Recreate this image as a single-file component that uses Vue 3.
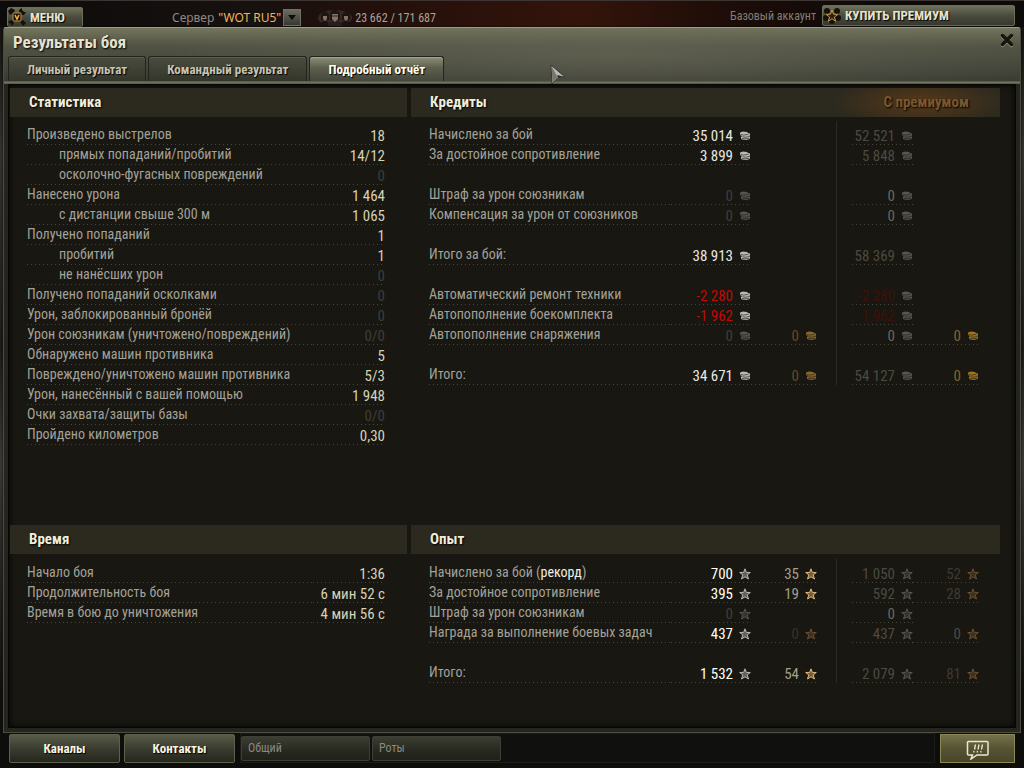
<script setup>
import { ref } from 'vue'

const tabs = ['Личный результат', 'Командный результат', 'Подробный отчёт']
const activeTab = ref(2)

const stats = [
  { label: 'Произведено выстрелов', value: '18' },
  { label: 'прямых попаданий/пробитий', value: '14/12', sub: true },
  { label: 'осколочно-фугасных повреждений', value: '0', sub: true, dim: true },
  { label: 'Нанесено урона', value: '1 464' },
  { label: 'с дистанции свыше 300 м', value: '1 065', sub: true },
  { label: 'Получено попаданий', value: '1' },
  { label: 'пробитий', value: '1', sub: true },
  { label: 'не нанёсших урон', value: '0', sub: true, dim: true },
  { label: 'Получено попаданий осколками', value: '0', dim: true },
  { label: 'Урон, заблокированный бронёй', value: '0', dim: true },
  { label: 'Урон союзникам (уничтожено/повреждений)', value: '0/0', dim: true },
  { label: 'Обнаружено машин противника', value: '5' },
  { label: 'Повреждено/уничтожено машин противника', value: '5/3' },
  { label: 'Урон, нанесённый с вашей помощью', value: '1 948' },
  { label: 'Очки захвата/защиты базы', value: '0/0', dim: true },
  { label: 'Пройдено километров', value: '0,30' },
]

const times = [
  { label: 'Начало боя', value: '1:36' },
  { label: 'Продолжительность боя', value: '6 мин 52 с' },
  { label: 'Время в бою до уничтожения', value: '4 мин 56 с' },
]

// Each cell is [text, style]; order: base, base extra, premium, premium extra.
const credits = [
  { label: 'Начислено за бой', cells: [['35 014', 'on'], null, ['52 521', 'prem'], null] },
  { label: 'За достойное сопротивление', cells: [['3 899', 'on'], null, ['5 848', 'prem'], null] },
  null,
  { label: 'Штраф за урон союзникам', cells: [['0', 'zero'], null, ['0', 'soft'], null] },
  { label: 'Компенсация за урон от союзников', cells: [['0', 'zero'], null, ['0', 'soft'], null] },
  null,
  { label: 'Итого за бой:', cells: [['38 913', 'on'], null, ['58 369', 'prem'], null] },
  null,
  { label: 'Автоматический ремонт техники', cells: [['-2 280', 'neg'], null, ['-2 280', 'negdim'], null] },
  { label: 'Автопополнение боекомплекта', cells: [['-1 962', 'neg'], null, ['-1 962', 'negdim'], null] },
  { label: 'Автопополнение снаряжения', cells: [['0', 'zero'], ['0', 'gold'], ['0', 'soft'], ['0', 'goldsoft']] },
  null,
  { label: 'Итого:', cells: [['34 671', 'on'], ['0', 'gold'], ['54 127', 'prem'], ['0', 'goldsoft']] },
]

const experience = [
  { label: 'Начислено за бой', note: 'рекорд', cells: [['700', 'hot'], ['35', 'free'], ['1 050', 'prem'], ['52', 'freedim']] },
  { label: 'За достойное сопротивление', cells: [['395', 'hot'], ['19', 'free'], ['592', 'prem'], ['28', 'freedim']] },
  { label: 'Штраф за урон союзникам', cells: [['0', 'zero'], null, ['0', 'soft'], null] },
  { label: 'Награда за выполнение боевых задач', cells: [['437', 'hot'], ['0', 'freezero'], ['437', 'prem'], ['0', 'freesoft']] },
  null,
  { label: 'Итого:', cells: [['1 532', 'hot'], ['54', 'free'], ['2 079', 'prem'], ['81', 'freedim']] },
]

const ledgers = [
  { id: 'credits', title: 'Кредиты', icon: 'coin', rows: credits, premium: true },
  { id: 'xp', title: 'Опыт', icon: 'star', rows: experience, premium: false },
]
const lists = [
  { id: 'stats', title: 'Статистика', rows: stats },
  { id: 'time', title: 'Время', rows: times },
]
</script>

<template>
  <div class="screen">
    <svg class="defs" aria-hidden="true">
      <symbol id="coin" viewBox="0 0 12 12">
        <path d="M1 2.500 4 1.500l4 .5 1 1 2 .5v2l-1 .5 1 .5v2l-1.500 1L7 10 3 9.500 2 8.500V7l1-1-2-1z" fill="currentColor" />
        <path d="M1.500 4.300l3 .8 5-.8M3.500 6.700l3 .5 4-.7M3 8.400l3 .4 4-.4" fill="none" stroke="#17160f" stroke-width=".6" />
      </symbol>
      <symbol id="star" viewBox="0 0 12 12">
        <path d="M6 .8 7.300 4.400l4 .1-3.100 2.400 1.300 4.100L6 8.800 2.500 11l1.300-4.100L.7 4.500l4-.1z" fill="currentColor" fill-opacity=".45" stroke="currentColor" stroke-width="1" />
      </symbol>
    </svg>

    <header class="topbar">
      <button class="menu" type="button">
        <svg viewBox="0 0 18 18" aria-hidden="true">
          <path d="M3 3l12 12M15 3 3 15" stroke="#11110c" stroke-width="3" />
          <path d="M0 3l3-3 4 2-1 2-4 3zM11 2l3-2v3l1 1h3l-2 3-4 0zM0 14l3-2 3 3-2 3-1-2zM13 14l2-2 3 3-3 3z" fill="#11110c" />
          <path d="M5 5h8v8H5z" fill="#1a160c" stroke="#c28a30" />
          <path d="M7 7l2 4 2-4" fill="none" stroke="#f0b24b" stroke-width="1.500" />
        </svg>
        МЕНЮ
      </button>
      <div class="server">
        <label for="server">Сервер</label>
        <div class="pick">
          <select id="server"><option>"WOT RU5"</option></select>
          <span class="arrow" aria-hidden="true"><svg viewBox="0 0 16 15"><path d="M4 5h8l-4 5z" fill="#0c0c08" /></svg></span>
        </div>
      </div>
      <div class="online">
        <svg viewBox="0 0 36 16" aria-hidden="true">
          <ellipse cx="18" cy="8" rx="17" ry="8" fill="#6b625c" opacity=".3" />
          <g>
            <path d="M3 16c0-4 3-5 5-5s4 1 4 5zM24 16c0-4 2-5 5-5s5 1 5 5z" fill="#171412" />
            <path d="M4 6a4 4 0 0 1 8 0v4H4zM25 6a4 4 0 0 1 8 0v4h-8z" fill="#1b1613" />
            <path d="M6 6h4v3l-2 2-2-2zM27 6h4v3l-2 2-2-2z" fill="#8d6d5b" />
            <path d="M11 16c0-4 4-5 7-5s7 1 7 5z" fill="#24201c" />
            <path d="M13 5a5 5 0 0 1 10 0v5H13z" fill="#1b1715" />
            <path d="M15 4h6v5l-3 3-3-3z" fill="#8a7268" />
            <path d="M15 6h6" stroke="#2d211c" />
          </g>
        </svg>
        23 662 / 171 687
      </div>
      <div class="account">
        <span>Базовый аккаунт</span>
        <button class="buy" type="button">
          <svg viewBox="0 0 18 18" aria-hidden="true">
            <g fill="#15120b"><circle cx="4" cy="4" r="3" /><circle cx="14" cy="4" r="3" /><circle cx="3" cy="11" r="3" /><circle cx="15" cy="11" r="3" /><circle cx="9" cy="14" r="3" /></g>
            <path d="M9 3l1.500 4.200 4.500.1-3.600 2.700 1.300 4.300L9 11.700l-3.700 2.600 1.300-4.300L3 7.300l4.500-.1z" fill="#2b2110" stroke="#c8974a" />
          </svg>
          КУПИТЬ ПРЕМИУМ
        </button>
      </div>
    </header>

    <main class="window">
      <div class="head">
        <div class="title">
          <h1>Результаты боя</h1>
          <button class="close" type="button" aria-label="Закрыть">
            <svg viewBox="0 0 16 16" aria-hidden="true">
              <path d="M3.500 4.500l9 9M12.500 4.500l-9 9" stroke="#8d8e79" stroke-width="3.500" stroke-linecap="round" />
              <path d="M3.500 3.500l9 9M12.500 3.500l-9 9" stroke="#15160f" stroke-width="3.500" stroke-linecap="round" />
            </svg>
          </button>
        </div>
        <div class="tabs" role="tablist">
          <button
            v-for="(tab, i) in tabs" :key="tab" type="button" role="tab"
            :aria-selected="activeTab === i" :class="{ active: activeTab === i }" @click="activeTab = i"
          >{{ tab }}</button>
        </div>
      </div>

      <div class="body">
        <section v-for="list in lists" :key="list.id" :class="['panel', list.id]">
          <h2>{{ list.title }}</h2>
          <table class="list">
            <tbody>
              <tr v-for="row in list.rows" :key="row.label">
                <th scope="row" :class="{ sub: row.sub }">{{ row.label }}</th>
                <td :class="row.dim ? 'zero' : 'value'">{{ row.value }}</td>
              </tr>
            </tbody>
          </table>
        </section>
        <section v-for="ledger in ledgers" :key="ledger.id" :class="['panel', ledger.id]">
          <h2>{{ ledger.title }}<span v-if="ledger.premium" class="with">С премиумом</span></h2>
          <table class="ledger">
            <colgroup>
              <col /><col class="c-main" /><col class="c-extra" /><col class="c-gap" /><col class="c-prem" /><col class="c-extra" />
            </colgroup>
            <tbody>
              <tr v-for="(row, i) in ledger.rows" :key="i">
                <template v-if="row">
                  <th scope="row">{{ row.label }}<template v-if="row.note"> (<b>{{ row.note }}</b>)</template></th>
                  <template v-for="(cell, j) in row.cells" :key="j">
                    <td v-if="j === 2"></td>
                    <td v-if="cell" :class="['sum', cell[1]]">
                      <span>{{ cell[0] }}</span><svg aria-hidden="true"><use :href="'#' + ledger.icon" /></svg>
                    </td>
                    <td v-else></td>
                  </template>
                </template>
                <td v-else colspan="6"></td>
              </tr>
            </tbody>
          </table>
        </section>
      </div>
    </main>

    <footer class="bottom">
      <button class="big" type="button">Каналы</button>
      <button class="big" type="button">Контакты</button>
      <div class="tray">
        <button type="button">Общий</button>
        <button type="button">Роты</button>
      </div>
      <button class="chat" type="button" aria-label="Уведомления">
        <svg viewBox="0 0 24 20" aria-hidden="true">
          <path d="M2 1.500h19a1 1 0 0 1 1 1V14a1 1 0 0 1-1 1H11l-6 4 1.500-4H2.500a1 1 0 0 1-1-1V2.500a1 1 0 0 1 1-1z" fill="none" stroke="#ece8cd" stroke-width="1.500" />
          <path d="M9.500 4.500l-1 5M13 4.500l-1 5M16.500 4.500l-1 5M8 11l-.3 1.500M11.500 11l-.3 1.500M15 11l-.3 1.500" stroke="#ece8cd" stroke-width="1.300" />
        </svg>
      </button>
    </footer>

    <svg class="pointer" viewBox="0 0 16 22" aria-hidden="true">
      <path d="M1 1l14 12-7 .5L2 20z" fill="#b9b9b3" stroke="#34342e" />
      <path d="M1.500 2l6 11L2.500 19z" fill="#77776f" />
      <path d="M7.500 13l7 0-7-2z" fill="#30302b" />
    </svg>
  </div>
</template>

<style>
body {
  margin: 0;
  background: #0d0c0a;
}
</style>

<style scoped>
.screen {
  position: relative;
  display: flex;
  flex-direction: column;
  box-sizing: border-box;
  min-height: 100vh;
  background: linear-gradient(#0f0c0a, #34322f 20%, #1c1b19 45%, #3a3734 60%, #100f0d 90%);
  color: #a3a198;
  font-family: "Roboto Condensed", "Liberation Sans Narrow", "Liberation Sans", sans-serif;
  font-size: 15px;
}
button,
select {
  font: inherit;
  cursor: pointer;
}
button {
  padding: 0;
  border: 0;
}
.defs {
  position: absolute;
  width: 0;
  height: 0;
}

.topbar {
  display: flex;
  align-items: center;
  height: 27px;
  padding: 0 9px 0 7px;
  border-top: 1px solid #3c3532;
  box-sizing: border-box;
  background: linear-gradient(90deg, #0c0b0a, #17110f 25%, #24100b 38%, #33140a 57%, #1c0c08 72%, #0d0b0a 85%);
}
.menu,
.buy {
  display: flex;
  align-items: center;
  gap: 4px;
  border: 1px solid #6c6e59;
  border-radius: 2px;
  background: linear-gradient(#6f715a, #4a4c3e 50%, #38392e);
  color: #e6e4cf;
  font-weight: bold;
  font-size: 13px;
  text-shadow: 1px 1px 1px #000;
}
.menu {
  width: 76px;
  height: 20px;
  align-self: flex-end;
}
.menu svg,
.buy svg {
  width: 18px;
  height: 18px;
}
.server {
  display: flex;
  align-items: center;
  gap: 4px;
  margin: 6px 0 0 89px;
  font: 12px "Noto Sans", sans-serif;
}
.server label {
  color: #8f8983;
}
.pick {
  position: relative;
  display: flex;
}
.pick select {
  width: 83px;
  height: 17px;
  padding: 0;
  border: 0;
  appearance: none;
  background: none;
  color: #f2b45c;
}
.arrow {
  position: absolute;
  top: 0;
  right: 0;
  width: 16px;
  height: 15px;
  border: 1px solid #6f6f63;
  background: linear-gradient(#6b6c60, #37382f);
  pointer-events: none;
}
.arrow svg {
  display: block;
}
.online {
  display: flex;
  align-items: center;
  gap: 2px;
  margin: 8px 0 0 16px;
  color: #aaa29a;
  font-size: 12px;
}
.online svg {
  width: 36px;
  height: 16px;
}
.account {
  display: flex;
  flex: 1;
  align-items: center;
  justify-content: flex-end;
  gap: 6px;
  margin-top: 3px;
  color: #827e76;
  font-size: 12px;
}
.buy {
  width: 193px;
  height: 21px;
}

.window {
  display: flex;
  flex: 1;
  flex-direction: column;
  margin: 0 3px;
  padding: 0 4px 4px;
  border: 1px solid #4b4d40;
  border-top-color: #9c9d80;
  border-radius: 3px 3px 0 0;
  background: #24251f;
  box-shadow: 0 0 2px #000;
}
.head {
  margin: 0 -4px;
  padding: 0 4px;
  border-bottom: 3px double #5c5d4e;
  background:
    radial-gradient(ellipse 45% 100% at 60% 50%, rgba(105, 105, 88, 0.6), transparent),
    linear-gradient(#73755d, #505242 35%, #45473c 70%, #3a3b33);
}
.title {
  display: flex;
  justify-content: space-between;
  align-items: center;
  height: 28px;
  padding-left: 5px;
}
h1 {
  margin: 0;
  color: #e4e2d0;
  font-size: 17px;
  text-shadow: 1px 1px 2px #000;
}
.close {
  width: 16px;
  height: 16px;
  margin: -4px 1px 0 0;
  background: none;
}
.close svg {
  display: block;
}
.tabs {
  display: flex;
  gap: 2px;
}
.tabs button {
  height: 25px;
  padding: 1px 18px 0;
  border: 1px solid #23241d;
  border-bottom: 0;
  border-radius: 3px 3px 0 0;
  background: linear-gradient(#4a4c3e, #34362c);
  box-shadow: inset 0 1px #5c5e4d;
  color: #c5c3b2;
  font-weight: bold;
  font-size: 13px;
  text-shadow: 1px 1px 1px #000;
}
.tabs .active {
  background: linear-gradient(#8d9075, #5d5f4e 45%, #45473b);
  box-shadow: inset 0 1px #a3a58a;
  color: #fffef0;
}

.body {
  display: grid;
  flex: 1;
  grid-template: "stats credits" 1fr "time xp" auto / 397fr 589fr;
  column-gap: 4px;
  padding: 3px 15px 0 1px;
  border: 1px solid #060605;
  background: #181711;
  box-shadow: inset 0 0 6px #000;
}
.stats { grid-area: stats; }
.time { grid-area: time; }
.credits { grid-area: credits; }
.xp { grid-area: xp; }
.panel h2 {
  display: flex;
  justify-content: space-between;
  margin: 0;
  padding: 0 0 0 19px;
  background: #2c291f;
  color: #efeddc;
  font-size: 15px;
  line-height: 29px;
  text-shadow: 1px 1px 2px #000;
}
.with {
  padding: 0 31px 0 60px;
  background: radial-gradient(ellipse 50% 90% at 55% 50%, rgba(110, 66, 20, 0.65), transparent);
  color: #79572f;
}

table {
  border-spacing: 0;
  table-layout: fixed;
}
tr {
  height: 20px;
}
th,
td {
  height: 18px;
  padding: 2px 0 0;
  line-height: 18px;
  text-align: right;
  vertical-align: top;
  white-space: nowrap;
}
th {
  padding: 0 0 1px;
  font-weight: normal;
  font-size: 14px;
  line-height: 19px;
  text-align: left;
}
th,
.list td,
.sum {
  background: repeating-linear-gradient(90deg, #48463a 0 1px, transparent 1px 4px) 0 100% / 100% 1px no-repeat;
}
.list {
  width: calc(100% - 39px);
  margin: 8px 22px 0 17px;
}
.list th {
  width: 80%;
}
.list .value {
  color: #d5d2b6;
}
.list .sub {
  padding-left: 32px;
}
.ledger {
  width: calc(100% - 39px);
  margin: 4px 21px 0 18px;
  padding-top: 4px;
  background: linear-gradient(#2b2a23, #2b2a23) calc(100% - 142px) 0 / 1px 100% no-repeat;
}
.xp .ledger {
  margin-top: 5px;
  margin-bottom: 44px;
}
.time .list {
  margin-top: 9px;
}
.c-main { width: 80px; }
.c-extra { width: 66px; }
.c-gap { width: 35px; }
.c-prem { width: 61px; }
th b {
  color: #f1efe2;
  font-weight: normal;
}
.sum svg {
  width: 12px;
  height: 12px;
  margin-left: 6px;
  vertical-align: -1px;
  color: #b9b9b3;
}
.on { color: #e8e8e2; }
.hot { color: #fffff6; }
.neg { color: #c00a06; }
.negdim { color: #3f110c; }
.prem { color: #4c4a42; }
.zero { color: #3f3e37; }
.soft { color: #6a685e; }
.free { color: #a39f8c; }
.freedim { color: #403a31; }
.freezero { color: #34322b; }
.freesoft { color: #4d4a40; }
.gold { color: #66492a; }
.goldsoft { color: #88602c; }
.zero svg,
.prem svg,
.soft svg,
.negdim svg { color: #57564f; }
.free svg { color: #e3b679; }
.freedim svg,
.freezero svg,
.freesoft svg { color: #6b5032; }
.gold svg { color: #8b6728; }
.goldsoft svg { color: #9f7420; }

.bottom {
  display: flex;
  align-items: center;
  gap: 4px;
  height: 30px;
  padding: 0 9px 5px;
  background: #0d0d0b;
}
.big {
  width: 111px;
  height: 29px;
  border: 1px solid #5d604d;
  border-radius: 2px;
  background: linear-gradient(#585b47, #3d3f32 45%, #25271e);
  color: #f6f4e0;
  font-weight: bold;
  font-size: 13px;
  text-shadow: 1px 1px 1px #000;
}
.tray {
  display: flex;
  flex: 1;
  align-items: center;
  gap: 2px;
  height: 28px;
  margin: 0 1px;
  border: 1px solid #1c1d19;
  background: #10110e;
}
.tray button {
  width: 129px;
  height: 25px;
  padding-left: 6px;
  border: 1px solid #3d3f35;
  border-radius: 2px;
  background: linear-gradient(#3c3e33, #272920 60%, #20221a);
  color: #8a8980;
  font-size: 12px;
  text-align: left;
}
.chat {
  width: 75px;
  height: 29px;
  border: 1px solid #8b8757;
  background: linear-gradient(#74714a, #555334 50%, #48462a);
}
.chat svg {
  display: block;
  width: 24px;
  height: 20px;
  margin: 3px auto 0;
}
.pointer {
  position: absolute;
  top: 64px;
  left: 550px;
  width: 16px;
  height: 22px;
}
</style>
